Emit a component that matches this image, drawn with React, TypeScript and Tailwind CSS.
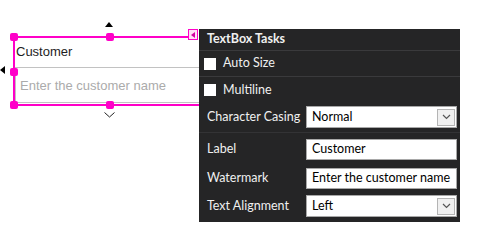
import { FunctionComponent } from 'react';

//  ---------------------------------------------------------------------------
//  UI
//  ---------------------------------------------------------------------------

const Handle: FunctionComponent<{ className: string }> = ({ className }) => {
  return <div className={`absolute h-[8px] w-[8px] rounded-[2px] bg-[#ff00c8] ${className}`} />;
};

const Chevron: FunctionComponent = () => {
  return (
    <svg width="9" height="6" viewBox="0 0 9 6">
      <path d="M1 1 L4.5 4.5 L8 1" fill="none" stroke="#555" strokeWidth="1.2" />
    </svg>
  );
};

const Select: FunctionComponent<{ value: string }> = ({ value }) => {
  return (
    <div className="flex h-[22px] w-[151px] shrink-0 items-center justify-between border border-[#a8a8a8] bg-white pl-[5px] pr-[1px] text-black">
      <span>{value}</span>
      <div className="flex h-[17px] w-[18px] items-center justify-center border border-[#b4b4b4] bg-[#f0f0f0]">
        <Chevron />
      </div>
    </div>
  );
};

const TextInput: FunctionComponent<{ value: string }> = ({ value }) => {
  return (
    <div className="flex h-[21px] w-[151px] shrink-0 items-center overflow-hidden whitespace-nowrap border border-[#a8a8a8] bg-white pl-[5px] text-black">
      {value}
    </div>
  );
};

const Row: FunctionComponent<{ label: string; children: React.ReactNode; className?: string }> = ({
  label,
  children,
  className = '',
}) => {
  return (
    <div className={`flex items-center ${className}`}>
      <span className="w-[107px] shrink-0 whitespace-nowrap pl-[8px]">{label}</span>
      {children}
    </div>
  );
};

const Designer: FunctionComponent = () => {
  return (
    <div className="absolute left-0 top-0 h-[130px] w-[200px]">
      {/* glyph arrows */}
      <div className="absolute left-[105px] top-[22px] h-0 w-0 border-x-[4px] border-b-[5px] border-x-transparent border-b-black" />
      <div className="absolute left-0 top-[66px] h-0 w-0 border-y-[4px] border-r-[5px] border-y-transparent border-r-black" />
      <svg className="absolute left-[104px] top-[112px]" width="11" height="6" viewBox="0 0 11 6">
        <path d="M0.5 0.5 L5.5 5 L10.5 0.5" fill="none" stroke="#222" strokeWidth="1" />
      </svg>

      {/* control */}
      <div className="absolute left-[13px] top-[36px] w-[186px] font-['Liberation_Sans',Arial,sans-serif] text-[13px]">
        <div className="flex h-[31px] items-center pl-[3px] text-[#1e1e1e]">Customer</div>
        <div className="ml-[2px] flex h-[36px] items-center border-l border-t border-b border-[#c2c2c2] pl-[4px] pt-[2px] text-[#ababab]">
          Enter the customer name
        </div>
      </div>

      {/* selection frame */}
      <div className="absolute left-[13px] top-[36px] h-[2px] w-[176px] bg-[#ff00c8]" />
      <div className="absolute left-[13px] top-[104px] h-[2px] w-[186px] bg-[#ff00c8]" />
      <div className="absolute left-[13px] top-[36px] h-[70px] w-[2px] bg-[#ff00c8]" />
      <Handle className="left-[10px] top-[33px]" />
      <Handle className="left-[106px] top-[33px]" />
      <Handle className="left-[10px] top-[68px]" />
      <Handle className="left-[10px] top-[101px]" />
      <Handle className="left-[106px] top-[101px]" />

      {/* smart tag glyph */}
      <div className="absolute left-[188px] top-[29px] flex h-[11px] w-[10px] items-center justify-center border border-[#ff00c8] bg-[#ffe0f7]">
        <div className="h-0 w-0 border-y-[3px] border-r-[4px] border-y-transparent border-r-[#d0009f]" />
      </div>
    </div>
  );
};

const TasksPanel: FunctionComponent = () => {
  return (
    <div className="absolute left-[199px] top-[29px] flex h-[193px] w-[261px] flex-col bg-[#252526] font-['Lato','Noto_Sans',sans-serif] text-[12.5px] text-[#f0f0f0]">
      <div className="flex h-[22px] items-center border-b border-[#3a3a3c] pl-[8px] font-bold">TextBox Tasks</div>
      <div className="flex h-[26px] items-center gap-[7px] border-b border-[#3a3a3c] pl-[5px]">
        <div className="h-[12px] w-[12px] bg-white" />
        <span>Auto Size</span>
      </div>
      <div className="flex h-[26px] items-center gap-[7px] pl-[5px]">
        <div className="h-[12px] w-[12px] bg-white" />
        <span>Multiline</span>
      </div>
      <Row label="Character Casing" className="h-[30px] border-b border-[#333335] pb-[1px]">
        <Select value="Normal" />
      </Row>
      <Row label="Label" className="h-[29px] pt-[3px]">
        <TextInput value="Customer" />
      </Row>
      <Row label="Watermark" className="h-[30px] pt-[2px]">
        <TextInput value="Enter the customer name" />
      </Row>
      <Row label="Text Alignment" className="h-[28px]">
        <Select value="Left" />
      </Row>
    </div>
  );
};

const App: FunctionComponent = () => {
  return (
    <div className="relative h-[246px] w-[487px] overflow-hidden bg-white">
      <Designer />
      <TasksPanel />
    </div>
  );
};

export default App;
